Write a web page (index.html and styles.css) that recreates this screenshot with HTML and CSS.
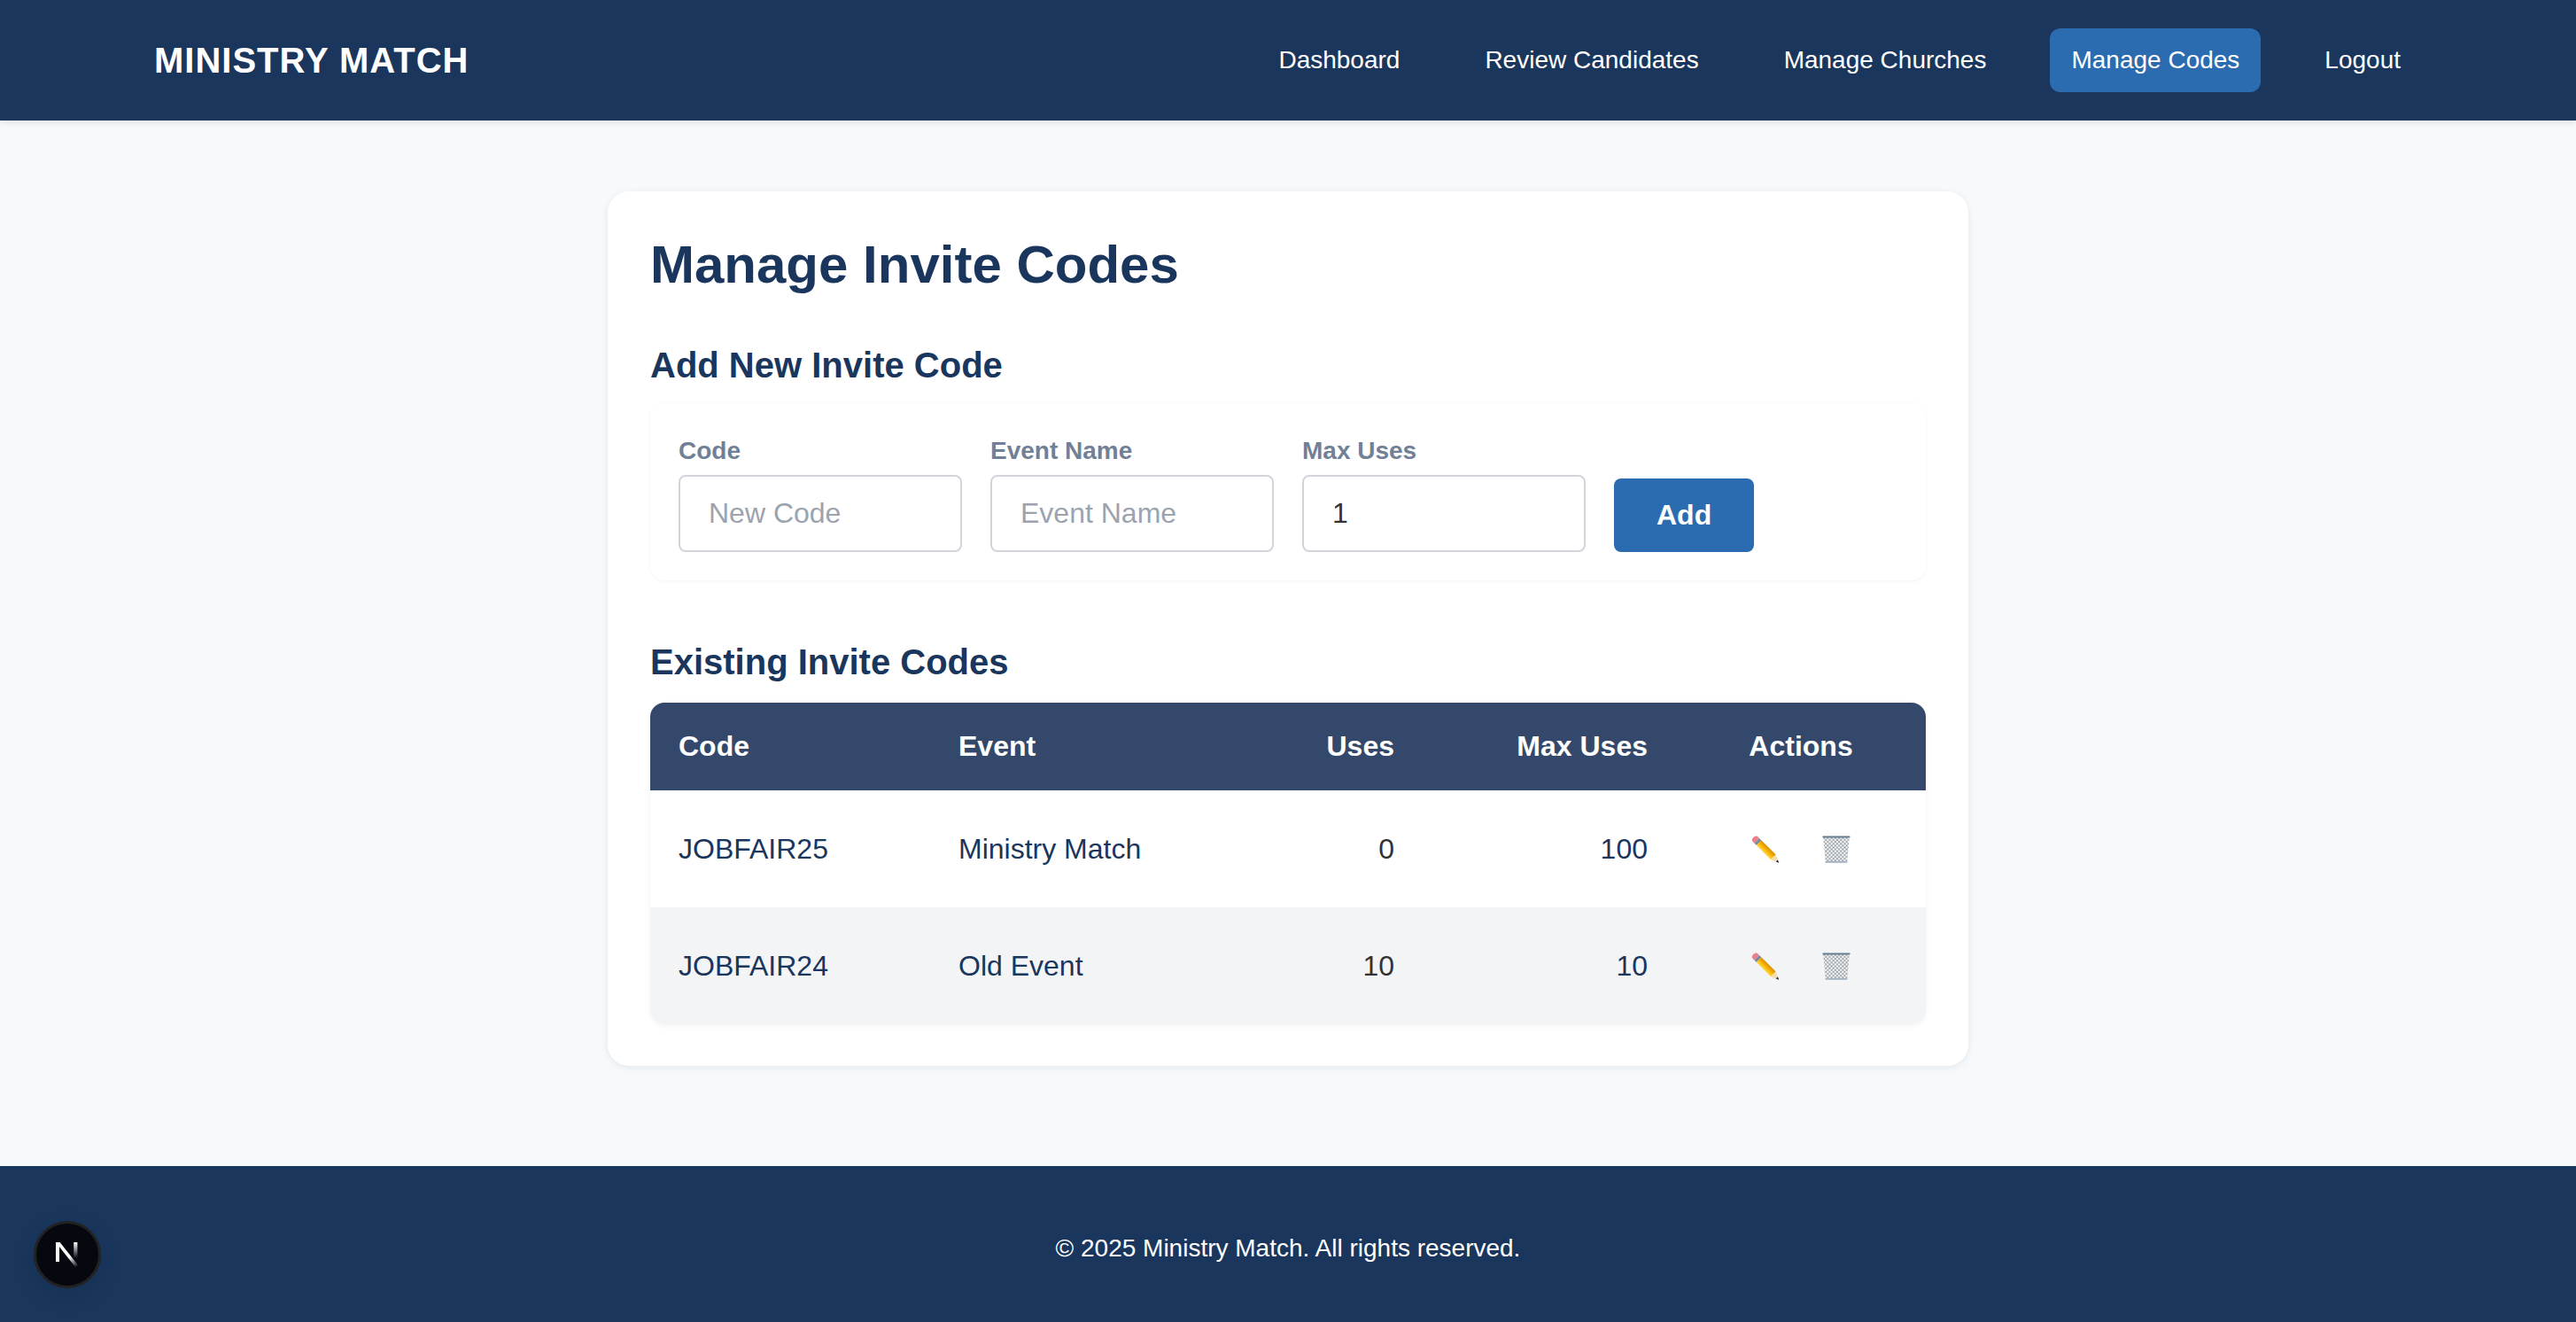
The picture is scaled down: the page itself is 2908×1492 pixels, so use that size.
FILE: index.html
```html
<!DOCTYPE html>
<html lang="en">
<head>
<meta charset="UTF-8" />
<meta name="viewport" content="width=device-width, initial-scale=1" />
<title>Manage Invite Codes</title>
<link rel="stylesheet" href="styles.css">
</head>
<body>
  <!-- emoji drawings, shared by the rows -->
  <svg class="sprites" width="0" height="0">
    <defs>
      <pattern id="mesh" width="3" height="3" patternUnits="userSpaceOnUse" patternTransform="rotate(45)">
        <rect width="3" height="3" fill="#f6f8f9"/>
        <path d="M0 0h3M0 0v3" stroke="#47535f" stroke-width="0.8"/>
      </pattern>
      <linearGradient id="pencilBody" x1="0" y1="0" x2="1" y2="0">
        <stop offset="0" stop-color="#ffd84a"/>
        <stop offset="0.5" stop-color="#f7b500"/>
        <stop offset="1" stop-color="#d98c00"/>
      </linearGradient>
      <g id="pencil">
        <g transform="translate(5 4.6) rotate(-45)">
          <path d="M-4 1.6v-2a4 3.4 0 0 1 8 0v2z" fill="#ec7f8c"/>
          <rect x="-4" y="1.6" width="8" height="3.6" fill="#7d8b9c"/>
          <rect x="-4" y="5.2" width="8" height="22.8" fill="url(#pencilBody)"/>
          <path d="M-4 28H4L0 37z" fill="#f5dcae"/>
          <path d="M-1.4 33.8H1.4L0 37z" fill="#1f1f1f"/>
        </g>
      </g>
      <g id="basket">
        <path d="M1.2 1.5h29.6l-2.6 29H3.8z" fill="url(#mesh)"/>
        <path d="M3.6 28.8h24.8l-.2 2H3.8z" fill="#a5b4c2"/>
        <rect x="0.4" y="0.4" width="31.2" height="2" rx="0.8" fill="#667c91"/>
      </g>
    </defs>
  </svg>

  <header class="navbar">
    <div class="navbar-inner">
      <a class="logo" href="#">MINISTRY MATCH</a>
      <nav class="nav-links">
        <a href="#">Dashboard</a>
        <a href="#">Review Candidates</a>
        <a href="#">Manage Churches</a>
        <a href="#" class="active">Manage Codes</a>
        <a href="#">Logout</a>
      </nav>
    </div>
  </header>

  <main class="main">
    <section class="card">
      <h1>Manage Invite Codes</h1>

      <h2 class="add-title">Add New Invite Code</h2>
      <form class="add-form">
        <div class="field">
          <label for="code">Code</label>
          <input id="code" type="text" placeholder="New Code">
        </div>
        <div class="field">
          <label for="eventName">Event Name</label>
          <input id="eventName" type="text" placeholder="Event Name">
        </div>
        <div class="field">
          <label for="maxUses">Max Uses</label>
          <input id="maxUses" type="text" value="1">
        </div>
        <button type="button" class="add-btn">Add</button>
      </form>

      <h2 class="list-title">Existing Invite Codes</h2>
      <table class="codes">
        <colgroup>
          <col class="col-code"><col class="col-event"><col class="col-uses"><col class="col-max"><col class="col-actions">
        </colgroup>
        <thead>
          <tr>
            <th>Code</th>
            <th>Event</th>
            <th class="num">Uses</th>
            <th class="num">Max Uses</th>
            <th class="center">Actions</th>
          </tr>
        </thead>
        <tbody>
          <tr>
            <td>JOBFAIR25</td>
            <td>Ministry Match</td>
            <td class="num uses">0</td>
            <td class="num">100</td>
            <td class="center">
              <div class="actions">
                <svg class="icon" viewBox="0 0 32 31"><use href="#pencil"/></svg>
                <svg class="icon" viewBox="0 0 32 31"><use href="#basket"/></svg>
              </div>
            </td>
          </tr>
          <tr>
            <td>JOBFAIR24</td>
            <td>Old Event</td>
            <td class="num uses">10</td>
            <td class="num">10</td>
            <td class="center">
              <div class="actions">
                <svg class="icon" viewBox="0 0 32 31"><use href="#pencil"/></svg>
                <svg class="icon" viewBox="0 0 32 31"><use href="#basket"/></svg>
              </div>
            </td>
          </tr>
        </tbody>
      </table>
    </section>
  </main>

  <footer class="footer">© 2025 Ministry Match. All rights reserved.</footer>

  <!-- dev indicator -->
  <div class="dev-badge">
    <svg viewBox="0 0 26 30" width="26" height="30">
      <defs>
        <linearGradient id="nDiag" gradientUnits="userSpaceOnUse" x1="2" y1="1" x2="24" y2="29">
          <stop offset="0.6" stop-color="#fff"/>
          <stop offset="1" stop-color="#fff" stop-opacity="0"/>
        </linearGradient>
        <linearGradient id="nBar" x1="0" y1="0" x2="0" y2="1">
          <stop offset="0" stop-color="#fff"/>
          <stop offset="1" stop-color="#fff" stop-opacity="0"/>
        </linearGradient>
      </defs>
      <path d="M0 1h4v22H0z" fill="#fff"/>
      <path d="M0 1h4.6L25.4 27.2 22.4 29.4z" fill="url(#nDiag)"/>
      <path d="M20.2 1h4.2v18h-4.2z" fill="url(#nBar)"/>
    </svg>
  </div>
</body>
</html>
```

FILE: styles.css
```css
* { box-sizing: border-box; }
body {
  margin: 0;
  min-height: 100vh;
  display: flex;
  flex-direction: column;
  background-color: #f7fafc;
  color: #1a365d;
  font-family: 'Liberation Sans', Arial, sans-serif;
}

/* navbar */
.navbar {
  height: 136px;
  background-color: #1a365d;
  box-shadow: 0 2px 8px rgba(0,0,0,0.1);
}
.navbar-inner {
  width: 2560px;
  height: 100%;
  margin: 0 auto;
  display: flex;
  align-items: center;
  justify-content: space-between;
}
.logo {
  color: white;
  font-size: 40px;
  font-weight: bold;
  letter-spacing: 1px;
  text-decoration: none;
}
.nav-links {
  display: flex;
  gap: 48px;
}
.nav-links a {
  height: 72px;
  padding: 0 24px;
  display: flex;
  align-items: center;
  border-radius: 12px;
  color: white;
  font-size: 28px;
  text-decoration: none;
}
.nav-links a.active { background-color: #2b6cb0; }

/* card */
.main {
  flex: 1;
  padding-top: 80px;
}
.card {
  width: 1536px;
  margin: 0 auto;
  padding: 48px 48px 47px;
  background-color: white;
  border-radius: 24px;
  box-shadow: 0 2px 8px rgba(0,0,0,0.08);
}
h1 {
  margin: 0;
  font-size: 60px;
  line-height: 70px;
  font-weight: bold;
}
h2 {
  margin: 0;
  font-size: 40px;
  line-height: 48px;
  font-weight: bold;
}
.add-title { margin-top: 54px; }
.list-title { margin-top: 68px; }

/* add form */
.add-form {
  margin-top: 19px;
  padding: 38px 32px 32px;
  display: flex;
  align-items: flex-end;
  gap: 32px;
  border-radius: 16px;
  background-color: white;
  box-shadow: 0 1px 4px rgba(0,0,0,0.05);
}
.field {
  width: 320px;
  display: flex;
  flex-direction: column;
  gap: 11px;
}
.field label {
  font-size: 28px;
  font-weight: bold;
  color: #718096;
}
.field input {
  height: 87px;
  padding: 0 32px;
  border: 2px solid #d1d5db;
  border-radius: 8px;
  background-color: white;
  color: #333;
  font-family: inherit;
  font-size: 32px;
}
.field input::placeholder { color: #9ca3af; }
.add-btn {
  height: 83px;
  padding: 0 48px;
  border: none;
  border-radius: 8px;
  background-color: #2b6cb0;
  color: white;
  font-family: inherit;
  font-size: 32px;
  font-weight: bold;
}

/* table */
.codes {
  width: 1440px;
  margin-top: 22px;
  table-layout: fixed;
  border-collapse: separate;
  border-spacing: 0;
  border-radius: 16px;
  overflow: hidden;
  font-size: 32px;
  box-shadow: 0 2px 6px rgba(0,0,0,0.05);
}
.col-code { width: 316px; }
.col-event { width: 350px; }
.col-uses { width: 206px; }
.col-max { width: 286px; }
.col-actions { width: 282px; }
.codes th {
  height: 99px;
  padding: 0 32px;
  background-color: #34486c;
  color: white;
  text-align: left;
  font-weight: bold;
}
.codes td {
  height: 132px;
  padding: 0 32px;
}
.codes tbody tr:nth-child(even) td { background-color: #f3f4f6; }
.codes .num { text-align: right; }
.codes .center { text-align: center; }
.codes .uses { color: #333; }
.actions {
  display: flex;
  justify-content: center;
  gap: 48px;
}
.icon {
  width: 32px;
  height: 31px;
}
.sprites { position: absolute; }

/* footer */
.footer {
  height: 176px;
  padding-top: 77px;
  background-color: #1a365d;
  color: white;
  text-align: center;
  font-size: 28px;
}

.dev-badge {
  position: fixed;
  left: 38px;
  bottom: 38px;
  width: 76px;
  height: 76px;
  display: flex;
  align-items: center;
  justify-content: center;
  border: 3px solid #222;
  border-radius: 50%;
  background-color: #05080f;
  box-shadow: 0 8px 24px rgba(0,0,0,0.1);
}
```
